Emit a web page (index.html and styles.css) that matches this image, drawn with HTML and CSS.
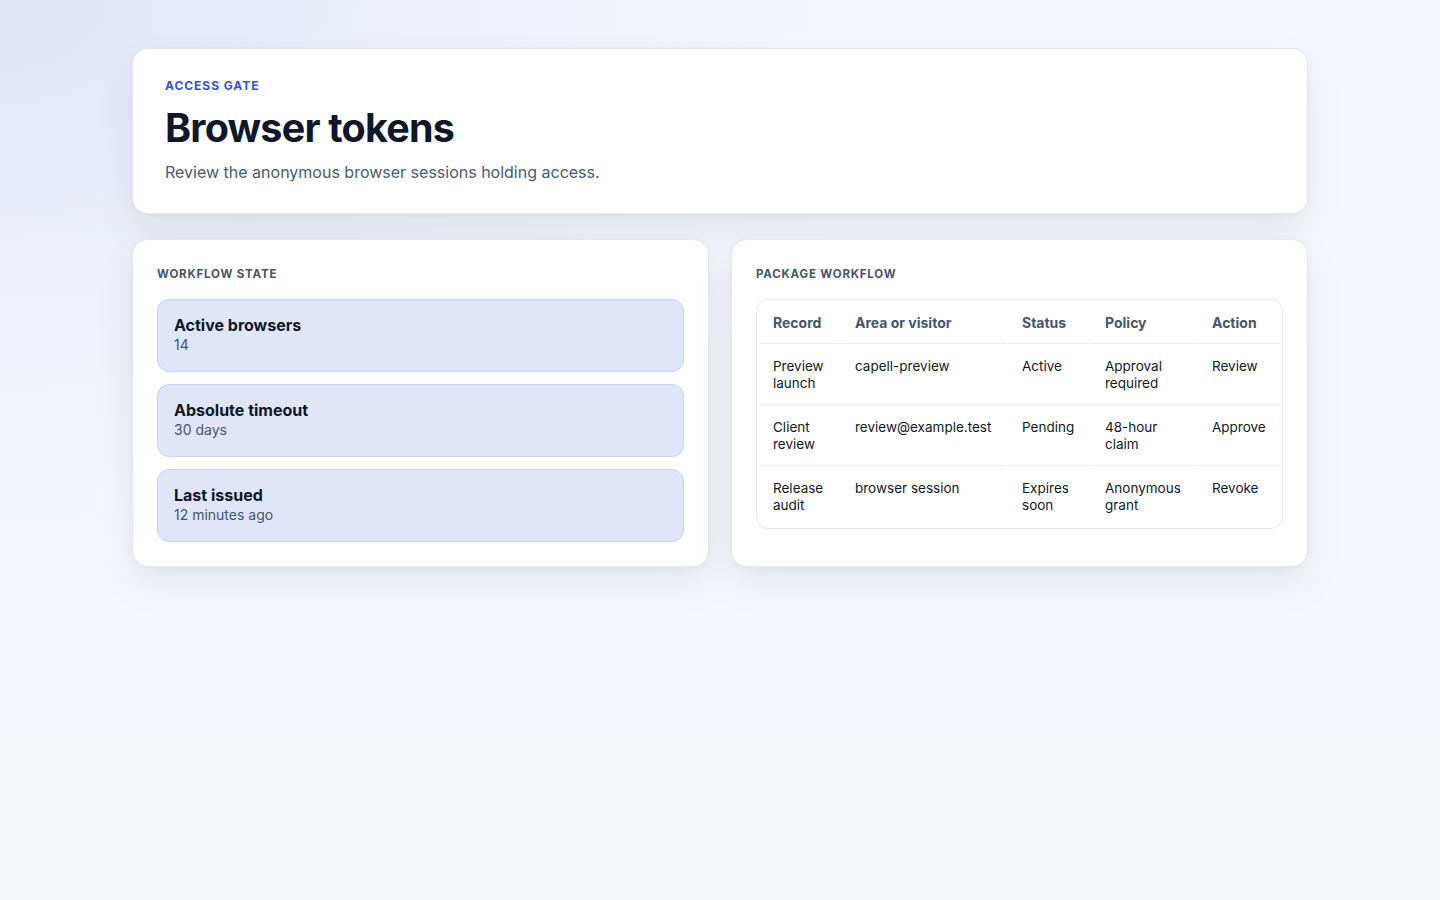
FILE: index.html
```html
<!DOCTYPE html>
<html lang="en">
<head>
	<meta charset="UTF-8" name="viewport" content="width=device-width" />
	<title>Browser tokens</title>
	<link rel="stylesheet" href="styles.css">
</head>
<body>
	<main class="page">
		<header class="card hero">
			<p class="eyebrow">Access gate</p>
			<h1>Browser tokens</h1>
			<p class="lede">Review the anonymous browser sessions holding access.</p>
		</header>

		<div class="columns">
			<section class="card panel">
				<h2 class="panel-title">Workflow state</h2>
				<ul class="stats">
					<li class="stat">
						<strong>Active browsers</strong>
						<span>14</span>
					</li>
					<li class="stat">
						<strong>Absolute timeout</strong>
						<span>30 days</span>
					</li>
					<li class="stat">
						<strong>Last issued</strong>
						<span>12 minutes ago</span>
					</li>
				</ul>
			</section>

			<section class="card panel">
				<h2 class="panel-title">Package workflow</h2>
				<div class="table-wrap">
					<table>
						<tr>
							<th class="c1">Record</th>
							<th class="c2">Area or visitor</th>
							<th class="c3">Status</th>
							<th class="c4">Policy</th>
							<th class="c5">Action</th>
						</tr>
						<tr>
							<td>Preview launch</td>
							<td>capell-preview</td>
							<td>Active</td>
							<td>Approval required</td>
							<td>Review</td>
						</tr>
						<tr>
							<td>Client review</td>
							<td>review@example.test</td>
							<td>Pending</td>
							<td>48-hour claim</td>
							<td>Approve</td>
						</tr>
						<tr class="last">
							<td>Release audit</td>
							<td>browser session</td>
							<td>Expires soon</td>
							<td>Anonymous grant</td>
							<td>Revoke</td>
						</tr>
					</table>
				</div>
			</section>
		</div>
	</main>
</body>
</html>
```

FILE: styles.css
```css
* {
	box-sizing: border-box;
}
html {
	min-height: 100%;
	background: #f5f6fb;
}
body {
	margin: 0;
	min-height: 100vh;
	font-family: Inter, "Noto Sans", "Liberation Sans", sans-serif;
	color: #0f172a;
	background:
		radial-gradient(ellipse 900px 600px at 0 0, #dfe4f7 0%, rgba(230, 234, 248, 0.6) 40%, rgba(245, 246, 251, 0) 100%),
		linear-gradient(180deg, #f4f6fb 0%, #f6f7fb 100%);
}
.page {
	max-width: 1176px;
	margin: 0 auto;
	padding: 48px 0;
}
.card {
	background: #fff;
	border: 1px solid #e6e8ef;
	border-radius: 16px;
	box-shadow: 0 18px 40px rgba(15, 23, 42, 0.07), 0 2px 6px rgba(15, 23, 42, 0.03);
}
.hero {
	padding: 29px 32px 29px;
}
.eyebrow {
	margin: 0;
	font-size: 12px;
	line-height: 16px;
	font-weight: 700;
	letter-spacing: 0.08em;
	text-transform: uppercase;
	color: #3452d4;
}
h1 {
	margin: 10px 0 0;
	font-size: 39.5px;
	line-height: 48px;
	font-weight: 700;
	letter-spacing: -0.02em;
	color: #0f172a;
}
.lede {
	margin: 8px 0 0;
	font-size: 16px;
	line-height: 24px;
	color: #4b5a70;
}
.columns {
	display: grid;
	grid-template-columns: minmax(0, 1fr) minmax(0, 1fr);
	gap: 22px;
	margin-top: 25px;
}
.panel {
	padding: 25px 24px 24px 24px;
}
.panel-title {
	margin: 0 0 15px;
	font-size: 11.5px;
	line-height: 19px;
	font-weight: 700;
	letter-spacing: 0.07em;
	text-transform: uppercase;
	color: #475569;
}
.stats {
	list-style: none;
	margin: 0;
	padding: 0;
	display: flex;
	flex-direction: column;
	gap: 12px;
}
.stat {
	display: flex;
	flex-direction: column;
	padding: 15px 16px 16px;
	background: #e0e6f8;
	border: 1px solid #c9d2ef;
	border-radius: 12px;
}
.stat strong {
	font-size: 16px;
	line-height: 20px;
	font-weight: 700;
	color: #0f172a;
}
.stat span {
	font-size: 14px;
	line-height: 20px;
	color: #475569;
}
.table-wrap {
	border: 1px solid #e6e8ef;
	border-radius: 12px;
	overflow: hidden;
}
table {
	width: 100%;
	table-layout: fixed;
	border-collapse: separate;
	border-spacing: 2px;
	font-size: 13.5px;
	line-height: 17px;
}
th, td {
	text-align: left;
	vertical-align: top;
	padding: 12px 14px;
	border-bottom: 1px solid #eceef3;
}
th {
	font-size: 14px;
	font-weight: 700;
	color: #475569;
}
td {
	color: #111827;
}
.c1 {
	width: 80px;
}
.c2 {
	width: 165px;
}
.c3 {
	width: 81px;
}
.c4 {
	width: 105px;
}
.c5 {
	width: 82px;
}
.last td {
	border-bottom: 0;
}
```
